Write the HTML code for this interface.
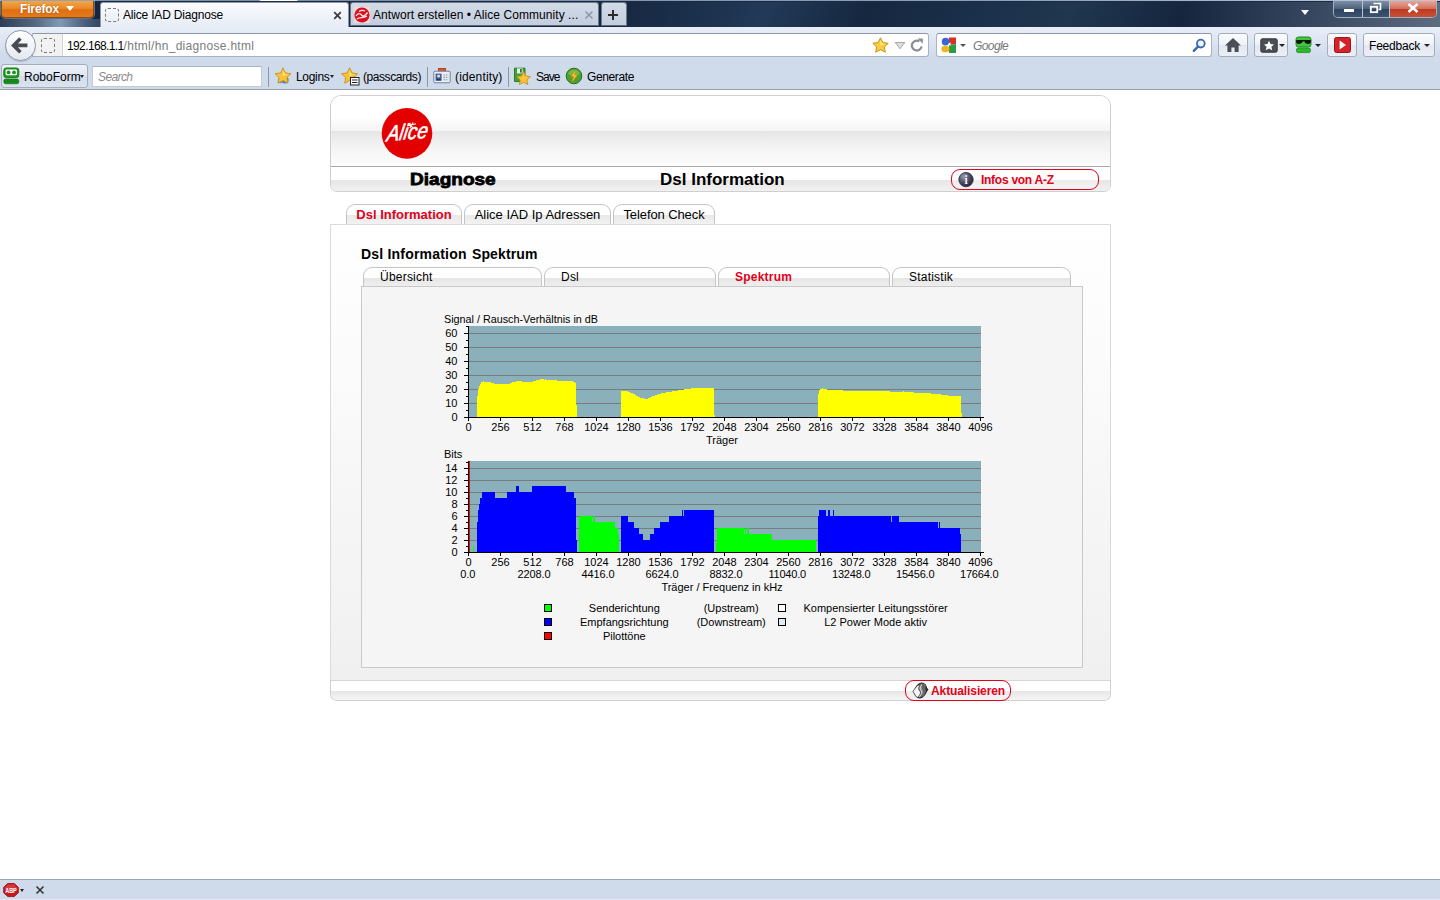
<!DOCTYPE html>
<html lang="de">
<head>
<meta charset="utf-8">
<title>Alice IAD Diagnose</title>
<style>
html,body{margin:0;padding:0;}
body{width:1440px;height:900px;overflow:hidden;background:#fff;position:relative;font-family:"Liberation Sans",sans-serif;color:#000;}
.abs{position:absolute;}
.ui{font-family:"Liberation Sans",sans-serif;font-size:12px;color:#000;white-space:nowrap;}
/* ---------- browser chrome ---------- */
#titlebar{left:0;top:0;width:1440px;height:27px;background:linear-gradient(90deg,rgba(0,0,0,0) 0%,rgba(0,0,0,0) 82%,rgba(120,135,155,.35) 92%,rgba(150,160,175,.55) 100%),linear-gradient(115deg,#16263f 0%,#16263f 42%,#1d3350 50%,#223a58 53%,#162740 60%,#1b304b 68%,#20374f 74%,#15253e 82%,#1a2d47 100%);}
#titleglow{left:0;top:19px;width:100px;height:8px;background:linear-gradient(90deg,#2c3e55 0%,#54687f 35%,#7f9bb8 60%,#4a5f78 85%,#33465e 100%);}
#topstrip{left:0;top:0;width:1440px;height:2px;background:#1b2b44;}
#topstrip2{left:0;top:0;width:1440px;height:1px;background:linear-gradient(90deg,#8496b0 0%,#7a8eaa 18%,#fff 18.1%,#fff 20.6%,#7a8eaa 20.7%,#8da0ba 70%,#aebdd2 90%,#b7c3d6 98.5%,#d9bcc4 99%,#d9bcc4 100%);}
#ffbtn{left:1px;top:1px;width:93px;height:17px;border-radius:0 0 4px 4px;background:linear-gradient(180deg,#f2a747 0%,#ea8a28 45%,#df6f14 55%,#e37a1c 100%);border:1px solid #8a4a12;border-top:none;box-sizing:border-box;box-shadow:0 0 0 1px rgba(160,175,195,.55);}
#ffbtn span{position:absolute;left:18px;top:1px;font-size:12px;font-weight:bold;color:#fff;letter-spacing:-.15px;text-shadow:0 0 2px rgba(120,50,0,.6);}
#fftri{left:66px;top:6px;width:0;height:0;border-left:4px solid transparent;border-right:4px solid transparent;border-top:5px solid #fff;}
.tab{top:2px;height:25px;box-sizing:border-box;border:1px solid #6d7a8c;border-bottom:none;border-radius:3px 3px 0 0;}
#tab1{left:100px;width:249px;background:linear-gradient(180deg,#fbfcfe 0%,#eef2f9 60%,#e6ecf6 100%);border-color:#8e99a8;}
#tab2{left:350px;width:249px;background:linear-gradient(180deg,#d3dbe8 0%,#c3cddd 100%);height:24px;border-bottom:1px solid #5d6a7c;}
#tab3{left:601px;width:26px;background:linear-gradient(180deg,#d3dbe8 0%,#c3cddd 100%);height:24px;border-bottom:1px solid #5d6a7c;}
#navbar{left:0;top:27px;width:1440px;height:36px;background:linear-gradient(180deg,#e8eef8 0%,#e3eaf5 20%,#cfdaeb 82%,#cfdaeb 100%);}
#bmbar{left:0;top:63px;width:1440px;height:26px;background:#cfdaeb;}
#chromeline{left:0;top:89px;width:1440px;height:1px;background:#9a9fa8;}
#urlbar{left:32px;top:33px;width:897px;height:24px;box-sizing:border-box;border:1px solid #a9b2c0;border-top-color:#8e97a6;border-radius:0 3px 3px 0;background:#fff;}
#idbox{left:33px;top:34px;width:29px;height:22px;background:#f2f2f2;border-right:1px solid #d4d4d4;}
.dash{box-sizing:border-box;border:1px dashed #7a7a7a;border-radius:3px;}
#backbtn{left:4.5px;top:29.5px;width:31px;height:31px;border-radius:50%;box-sizing:border-box;border:1px solid #8d97a8;background:linear-gradient(180deg,#ffffff 0%,#f1f4f9 50%,#e3e8f0 100%);box-shadow:0 1px 1px rgba(0,0,0,.15);}
#searchbar{left:936px;top:33px;width:276px;height:24px;box-sizing:border-box;border:1px solid #a9b2c0;border-top-color:#8e97a6;border-radius:3px;background:#fff;}
.tbtn{top:33px;height:24px;box-sizing:border-box;border:1px solid #a4adbb;border-radius:3px;background:linear-gradient(180deg,#fbfcfe 0%,#eef1f7 50%,#e2e7f0 51%,#eceff5 100%);}
.sep{top:67px;width:1px;height:20px;background:#9097a3;}
#statusbar{left:0;top:879px;width:1440px;height:21px;background:#cfdaeb;border-top:1px solid #9aa7bb;box-sizing:border-box;}
/* ---------- page ---------- */
#hdr{left:330px;top:95px;width:781px;height:97px;box-sizing:border-box;border:1px solid #cfcfcf;border-radius:11px 11px 7px 7px;overflow:hidden;background:#fff;}
#hdr .g1{left:0;top:0;width:100%;height:35px;background:linear-gradient(180deg,#fff 0%,#fff 60%,#f4f4f4 100%);}
#hdr .g2{left:0;top:35px;width:100%;height:35px;background:linear-gradient(180deg,#e5e5e5 0%,#eeeeee 25%,#f6f6f6 60%,#fcfcfc 100%);}
#hdr .ln{left:0;top:70px;width:100%;height:1px;background:#a9a9a9;}
#hdr .g3{left:0;top:71px;width:100%;height:13px;background:#fff;}
#hdr .g4{left:0;top:84px;width:100%;height:12px;background:linear-gradient(180deg,#e6e6e6 0%,#f2f2f2 100%);}
.ptab{top:204px;height:21px;box-sizing:border-box;border:1px solid #c4c4c4;border-bottom:none;border-radius:9px 9px 0 0;background:linear-gradient(180deg,#fff 0%,#fff 50%,#e9e9e9 52%,#f3f3f3 100%);font-size:13px;line-height:19px;text-align:center;white-space:nowrap;}
#content{left:330px;top:224px;width:781px;height:457px;box-sizing:border-box;border:1px solid #dadada;border-bottom:none;background:linear-gradient(180deg,#fff 0%,#fbfbfb 30%,#f0f0f0 100%);}
.stab{top:267px;height:20px;box-sizing:border-box;border:1px solid #c4c4c4;border-bottom:none;border-radius:9px 9px 0 0;background:linear-gradient(180deg,#fff 0%,#fff 52%,#e6e6e6 54%,#efefef 100%);font-size:12px;line-height:18px;white-space:nowrap;letter-spacing:.22px;}
#inner{left:361px;top:286px;width:722px;height:382px;box-sizing:border-box;border:1px solid #c9c9c9;background:#f5f5f5;}
#ftr{left:330px;top:680px;width:781px;height:21px;box-sizing:border-box;border:1px solid #cfcfcf;border-top-color:#d6d6d6;border-radius:0 0 7px 7px;overflow:hidden;background:#fff;}
#ftr .g{left:0;top:10px;width:100%;height:10px;background:linear-gradient(180deg,#e6e6e6 0%,#f7f7f7 100%);}
.rbtn{box-sizing:border-box;border:1px solid #e2001a;border-radius:9px;background:linear-gradient(180deg,#fff 0%,#fff 52%,#ececec 55%,#f4f4f4 100%);color:#e2001a;font-weight:bold;font-size:12px;white-space:nowrap;}
svg text{font-family:"Liberation Sans",sans-serif;}
</style>
</head>
<body>
<!-- CHROME -->
<div id="titlebar" class="abs"></div>
<div id="topstrip" class="abs"></div>
<div id="topstrip2" class="abs"></div>
<div id="titleglow" class="abs"></div>
<div id="ffbtn" class="abs ui"><span>Firefox</span></div>
<div id="fftri" class="abs"></div>
<div id="tab1" class="abs tab"></div>
<div id="tab2" class="abs tab"></div>
<div id="tab3" class="abs tab"></div>
<div id="navbar" class="abs"></div>
<div id="bmbar" class="abs"></div>
<div id="chromeline" class="abs"></div>
<!-- tab contents -->
<div class="abs dash" style="left:105px;top:8px;width:14px;height:14px;"></div>
<div class="abs ui" id="t1txt" style="letter-spacing:-0.19px;left:123px;top:8px;font-size:12px;">Alice IAD Diagnose</div>
<svg class="abs" style="left:333px;top:11px" width="9" height="9" viewBox="0 0 9 9"><path d="M1.2 1.2 L7.8 7.8 M7.8 1.2 L1.2 7.8" stroke="#3a3a3a" stroke-width="1.7" fill="none"/></svg>
<svg class="abs" style="left:354px;top:7px" width="16" height="16" viewBox="0 0 16 16"><rect x="0" y="0" width="16" height="16" fill="#f4d9dc"/><circle cx="8" cy="8" r="7.6" fill="#d9101f"/><path d="M2 9 C4 6 6 6 7.5 8 C9 10 11 9 13.5 5.5 M3 12 C6 9.5 9 12 13 9 M5 4.5 C7 3 9 3 11 4" stroke="#fbe9ea" stroke-width="1.3" fill="none"/></svg>
<div class="abs ui" id="t2txt" style="letter-spacing:0.06px;left:373px;top:8px;font-size:12px;">Antwort erstellen • Alice Community ...</div>
<svg class="abs" style="left:584px;top:10px" width="10" height="10" viewBox="0 0 10 10"><path d="M1.5 1.5 L8.5 8.5 M8.5 1.5 L1.5 8.5" stroke="#8f98a6" stroke-width="1.6" fill="none"/></svg>
<svg class="abs" style="left:607px;top:9px" width="12" height="12" viewBox="0 0 12 12"><path d="M6 1 V11 M1 6 H11" stroke="#2b2b2b" stroke-width="2" fill="none"/></svg>
<!-- window controls -->
<div class="abs" style="left:1301px;top:10px;width:0;height:0;border-left:4px solid transparent;border-right:4px solid transparent;border-top:5px solid #fff;"></div>
<div class="abs" id="wctl" style="left:1333px;top:1px;width:104px;height:17px;box-sizing:border-box;border:1px solid #9fb0c4;border-top:none;border-radius:0 0 5px 5px;overflow:hidden;background:#3a4c64;">
  <div class="abs" style="left:0;top:0;width:28px;height:17px;background:linear-gradient(180deg,#7d8fa6 0%,#4e627c 45%,#2f4460 50%,#3d5472 100%);border-right:1px solid #b9c6d6;"></div>
  <div class="abs" style="left:29px;top:0;width:26px;height:17px;background:linear-gradient(180deg,#7d8fa6 0%,#4e627c 45%,#2f4460 50%,#3d5472 100%);border-right:1px solid #b9c6d6;"></div>
  <div class="abs" style="left:56px;top:0;width:47px;height:17px;background:linear-gradient(180deg,#e3a79b 0%,#d2705d 45%,#bf3a20 50%,#c9543a 100%);"></div>
  <div class="abs" style="left:10px;top:8px;width:10px;height:3px;background:#fff;box-shadow:0 0 1px #333;"></div>
  <svg class="abs" style="left:35px;top:1px" width="13" height="12" viewBox="0 0 13 12"><path d="M4.5 1.5 H11.5 V7.5 H9.5" stroke="#fff" stroke-width="1.6" fill="none"/><rect x="1.8" y="4.8" width="6.4" height="5.4" stroke="#fff" stroke-width="1.8" fill="none"/></svg>
  <svg class="abs" style="left:73px;top:2px" width="12" height="10" viewBox="0 0 12 10"><path d="M1.5 1 L10.5 9 M10.5 1 L1.5 9" stroke="#fff" stroke-width="2.6" fill="none"/></svg>
</div>
<!-- nav bar -->
<div id="urlbar" class="abs"></div>
<div id="idbox" class="abs"></div>
<div id="backbtn" class="abs"></div>
<svg class="abs" style="left:11px;top:37px" width="18" height="17" viewBox="0 0 18 17"><path d="M9.4 1.6 L2.6 8.4 L9.4 15.2 M3.4 8.4 H16.4" stroke="#484d53" stroke-width="3.6" fill="none" stroke-linejoin="miter"/></svg>
<div class="abs dash" style="left:41px;top:38px;width:14px;height:15px;"></div>
<div class="abs ui" id="urltxt" style="left:67px;top:39px;font-size:12px;"><span style="color:#000;letter-spacing:-0.62px">192.168.1.1</span><span style="color:#7b7b7b;letter-spacing:.3px">/html/hn_diagnose.html</span></div>
<svg class="abs" style="left:872px;top:37px" width="17" height="16" viewBox="0 0 17 16"><path d="M8.5 0.8 L10.9 5.6 L16.2 6.3 L12.3 10 L13.3 15.2 L8.5 12.7 L3.7 15.2 L4.7 10 L0.8 6.3 L6.1 5.6 Z" fill="#f9cf3f" stroke="#c8901a" stroke-width="1"/><path d="M8.5 3 L10.1 6.5 L13.5 7 L8.5 8 Z" fill="#fdeea0"/></svg>
<svg class="abs" style="left:894px;top:41px" width="12" height="9" viewBox="0 0 12 9"><path d="M1.2 1.5 H10.8 L6 7.8 Z" fill="#dcdcdc" stroke="#a9a9a9" stroke-width="1"/></svg>
<svg class="abs" style="left:910px;top:38px" width="14" height="14" viewBox="0 0 14 14"><path d="M11.6 8.4 A4.9 4.9 0 1 1 9.4 3.4" stroke="#8a8e95" stroke-width="2.2" fill="none"/><path d="M7.6 0.6 H12.8 V5.8 Z" fill="#8a8e95"/></svg>
<div id="searchbar" class="abs"></div>
<svg class="abs" style="left:940px;top:37px" width="17" height="16" viewBox="0 0 17 16"><rect x="0" y="0" width="16" height="16" fill="#fff"/><rect x="9" y="0.5" width="7" height="7" fill="#d92f25"/><rect x="9" y="7.5" width="7" height="8.5" fill="#2c9c43"/><ellipse cx="5.6" cy="4.6" rx="3.8" ry="3.9" fill="#3567d6"/><ellipse cx="5.4" cy="12" rx="4" ry="3.2" fill="#f0b41c"/><path d="M8 7 L10.5 5.2 V9 Z" fill="#fff"/></svg>
<div class="abs" style="left:960px;top:44px;width:0;height:0;border-left:3px solid transparent;border-right:3px solid transparent;border-top:3px solid #555;"></div>
<div class="abs ui" id="gtxt" style="letter-spacing:-0.6px;left:973px;top:39px;font-size:12px;font-style:italic;color:#777;">Google</div>
<svg class="abs" style="left:1192px;top:38px" width="15" height="15" viewBox="0 0 15 15"><circle cx="8.8" cy="5.6" r="3.9" stroke="#3b68ad" stroke-width="1.8" fill="#eef4fc"/><path d="M6 8.6 L1.8 12.8" stroke="#3b68ad" stroke-width="2.4" stroke-linecap="round"/></svg>
<div class="abs tbtn" style="left:1218px;width:30px;"></div>
<svg class="abs" style="left:1224px;top:37px" width="18" height="16" viewBox="0 0 18 16"><path d="M9 1 L17 8.6 H14.6 V15 H10.6 V10.4 H7.4 V15 H3.4 V8.6 H1 Z" fill="#4b4f55"/></svg>
<div class="abs tbtn" style="left:1254px;width:34px;"></div>
<svg class="abs" style="left:1260px;top:38px" width="18" height="15" viewBox="0 0 18 15"><rect x="0.8" y="0.8" width="16.4" height="13.4" rx="1.5" fill="#4b4f55" stroke="#33373c"/><path d="M9 2.8 L10.5 6 L14 6.4 L11.4 8.7 L12.2 12.2 L9 10.4 L5.8 12.2 L6.6 8.7 L4 6.4 L7.5 6 Z" fill="#fff"/></svg>
<div class="abs" style="left:1278.5px;top:44px;width:0;height:0;border-left:3px solid transparent;border-right:3px solid transparent;border-top:3px solid #222;"></div>
<svg class="abs" style="left:1295px;top:36px" width="18" height="18" viewBox="0 0 18 18"><rect x="1" y="1" width="15" height="10" rx="2.5" fill="#3ec93a" stroke="#1f8a1e"/><rect x="1.5" y="12" width="14" height="4.6" rx="1.8" fill="#2fb62c" stroke="#1f8a1e" stroke-width=".8"/><path d="M1.2 4 H15.8 V6 C15.8 8.6 10.2 8.6 9.4 5.6 H7.6 C6.8 8.6 1.2 8.6 1.2 6 Z" fill="#111"/></svg>
<div class="abs" style="left:1315px;top:44px;width:0;height:0;border-left:3px solid transparent;border-right:3px solid transparent;border-top:3px solid #222;"></div>
<div class="abs tbtn" style="left:1327px;width:30px;"></div>
<svg class="abs" style="left:1334px;top:37px" width="17" height="16" viewBox="0 0 17 16"><rect x="0.5" y="0.5" width="16" height="15" rx="2" fill="#d4222b" stroke="#9c1219"/><path d="M5.6 3.6 L12 8 L5.6 12.4 Z" fill="#fff"/></svg>
<div class="abs tbtn" style="left:1363px;width:72px;"></div>
<div class="abs ui" id="fbtxt" style="letter-spacing:-0.2px;left:1369px;top:39px;font-size:12px;">Feedback</div>
<div class="abs" style="left:1424px;top:44px;width:0;height:0;border-left:3px solid transparent;border-right:3px solid transparent;border-top:3px solid #222;"></div>
<!-- bookmarks / roboform bar -->
<div class="abs" style="left:1px;top:64px;width:87px;height:24px;box-sizing:border-box;border:1px solid #a4adbb;border-radius:3px;background:linear-gradient(180deg,#eef2f9 0%,#dfe6f2 50%,#d3dcea 51%,#dbe3ef 100%);"></div>
<svg class="abs" style="left:3px;top:67px" width="17" height="18" viewBox="0 0 17 18"><rect x="0.8" y="1" width="15" height="9.6" rx="2.4" fill="#1f9a22" stroke="#157a18"/><rect x="2.6" y="2.6" width="11.4" height="5.6" rx="1.2" fill="#fff"/><circle cx="5.6" cy="5.4" r="1.9" fill="#1c8f1f"/><circle cx="11" cy="5.4" r="1.9" fill="#1c8f1f"/><rect x="0.8" y="12" width="15" height="4.8" rx="1.8" fill="#168a19" stroke="#0f6e12" stroke-width=".6"/></svg>
<div class="abs ui" id="rftxt" style="left:24px;top:70px;font-size:12px;">RoboForm</div>
<div class="abs" style="left:80px;top:75px;width:0;height:0;border-left:2.5px solid transparent;border-right:2.5px solid transparent;border-top:3px solid #222;"></div>
<div class="abs" style="left:92px;top:66px;width:170px;height:21px;box-sizing:border-box;border:1px solid #c3cbd8;border-top-color:#aab3c2;background:#fff;"></div>
<div class="abs ui" id="srchtxt" style="letter-spacing:-0.6px;left:98px;top:70px;font-size:12px;font-style:italic;color:#8a8a8a;">Search</div>
<div class="abs sep" style="left:268px;"></div>
<svg class="abs" style="left:274px;top:67px" width="18" height="18" viewBox="0 0 18 18"><circle cx="11" cy="13" r="3.6" fill="#3d7fcc"/><circle cx="6.4" cy="13.6" r="2.6" fill="#5b9be0"/><path d="M9 0.8 L11.4 6 L17 6.7 L12.9 10.6 L13.9 16.2 L9 13.5 L4.1 16.2 L5.1 10.6 L1 6.7 L6.6 6 Z" fill="#f7c437" stroke="#cf8f17" stroke-width=".9"/><path d="M9 3 L10.6 6.8 L14 7.3 L9 9 Z" fill="#fde58c"/></svg>
<div class="abs ui" id="logtxt" style="letter-spacing:-0.3px;left:296px;top:70px;font-size:12px;">Logins</div>
<div class="abs" style="left:330px;top:75px;width:0;height:0;border-left:2.5px solid transparent;border-right:2.5px solid transparent;border-top:3px solid #222;"></div>
<svg class="abs" style="left:341px;top:67px" width="19" height="19" viewBox="0 0 19 19"><path d="M8.6 0.8 L11 6 L16.6 6.7 L12.5 10.6 L13.5 16.2 L8.6 13.5 L3.7 16.2 L4.7 10.6 L0.6 6.7 L6.2 6 Z" fill="#f7c437" stroke="#cf8f17" stroke-width=".9"/><path d="M8.6 3 L10.2 6.8 L13.6 7.3 L8.6 9 Z" fill="#fde58c"/><rect x="9.5" y="10.5" width="8.5" height="7.5" fill="#fff" stroke="#222" stroke-width="1"/><path d="M11 13 H16.5 M11 15.5 H16.5" stroke="#222" stroke-width="1.2"/></svg>
<div class="abs ui" id="pctxt" style="letter-spacing:-0.43px;left:363px;top:70px;font-size:12px;">(passcards)</div>
<div class="abs sep" style="left:427px;"></div>
<svg class="abs" style="left:433px;top:68px" width="18" height="16" viewBox="0 0 18 16"><rect x="5.5" y="0.5" width="7" height="3.5" fill="#e0522e" stroke="#a33412" stroke-width=".8"/><rect x="0.8" y="3.2" width="16.4" height="11.6" rx="1.2" fill="#e9eef6" stroke="#6e7f98"/><rect x="2.6" y="5.6" width="6" height="7" fill="#3c5f9c"/><circle cx="5.6" cy="8" r="1.6" fill="#f3d3b0"/><path d="M3 12.6 C3 10 8.2 10 8.2 12.6 Z" fill="#223a66"/><path d="M10.4 7 H15.4 M10.4 9.4 H15.4 M10.4 11.8 H15.4" stroke="#8a97ab" stroke-width="1.1" stroke-dasharray="1.6 .8"/></svg>
<div class="abs ui" id="idtxt" style="letter-spacing:0.15px;left:455px;top:70px;font-size:12px;">(identity)</div>
<div class="abs sep" style="left:508px;"></div>
<svg class="abs" style="left:513px;top:67px" width="18" height="18" viewBox="0 0 18 18"><path d="M1.5 1.2 H12 V14.6 H1.5 Z" fill="#3fa338" stroke="#22721f" stroke-width=".9"/><rect x="4" y="1.4" width="5.6" height="5" fill="#e9f3e6"/><rect x="7" y="2" width="1.8" height="3.6" fill="#2c7d27"/><path d="M10.6 4.6 L12.6 9 L17.4 9.6 L13.9 12.9 L14.8 17.6 L10.6 15.3 L6.4 17.6 L7.3 12.9 L3.8 9.6 L8.6 9 Z" fill="#f7c437" stroke="#cf8f17" stroke-width=".9"/></svg>
<div class="abs ui" id="svtxt" style="letter-spacing:-0.95px;left:536px;top:70px;font-size:12px;">Save</div>
<svg class="abs" style="left:565px;top:67px" width="18" height="18" viewBox="0 0 18 18"><circle cx="9" cy="9" r="7.8" fill="#4da02f" stroke="#2c6f1b"/><path d="M3 7 A6.4 6.4 0 0 1 15 7 C11 9 7 9 3 7 Z" fill="#79c256" opacity=".8"/><path d="M11.2 2.6 L5.6 9.6 H8.6 L6.8 15.4 L12.6 7.8 H9.6 Z" fill="#f6c233" stroke="#c98a12" stroke-width=".6"/></svg>
<div class="abs ui" id="gentxt" style="letter-spacing:-0.38px;left:587px;top:70px;font-size:12px;">Generate</div>

<!-- PAGE -->
<div id="hdr" class="abs"><div class="abs g1"></div><div class="abs g2"></div><div class="abs ln"></div><div class="abs g3"></div><div class="abs g4"></div></div>
<svg class="abs" style="left:380px;top:107px" width="54" height="54" viewBox="0 0 54 54"><circle cx="27" cy="26.4" r="25.3" fill="#e20000"/><g transform="translate(27.5 26) rotate(-5) skewX(-14)"><text x="0" y="6.4" text-anchor="middle" font-size="22" font-style="italic" fill="#fff" stroke="#fff" stroke-width=".55" textLength="41" lengthAdjust="spacingAndGlyphs" style="font-family:'Liberation Sans',sans-serif">Alice</text></g><path d="M27 19 L36 16.7 M29.5 16.1 L32.5 20.5 M33.1 15.5 L29.9 20.9" stroke="#fff" stroke-width="1.1" fill="none"/></svg>
<div class="abs" id="h1a" style="left:410px;top:170px;font-size:17px;line-height:20px;font-weight:bold;white-space:nowrap;-webkit-text-stroke:0.8px #000;transform-origin:0 0;transform:scaleX(1.12);">Diagnose</div>
<div class="abs" id="h1b" style="left:660px;top:170px;font-size:17px;line-height:20px;font-weight:bold;white-space:nowrap;">Dsl Information</div>
<div class="abs rbtn" id="infobtn" style="left:951px;top:169px;width:148px;height:21px;"></div>
<svg class="abs" style="left:958px;top:172px" width="16" height="16" viewBox="0 0 16 16"><defs><radialGradient id="ig" cx="35%" cy="30%" r="75%"><stop offset="0" stop-color="#9a9ab0"/><stop offset=".55" stop-color="#4a4a60"/><stop offset="1" stop-color="#26263a"/></radialGradient></defs><circle cx="8" cy="7.6" r="7.2" fill="url(#ig)" stroke="#2c2c3c" stroke-width=".8"/><text x="8" y="12" text-anchor="middle" font-size="11.5" font-weight="bold" fill="#f4f4f8" style="font-family:'Liberation Serif',serif">i</text></svg>
<div class="abs" id="infotxt" style="letter-spacing:-0.27px;left:981px;top:173px;font-size:12px;line-height:14px;font-weight:bold;color:#e2001a;white-space:nowrap;">Infos von A-Z</div>
<div class="abs ptab" id="pt1" style="left:346px;width:116px;color:#e2001a;font-weight:bold;">Dsl Information</div>
<div class="abs ptab" id="pt2" style="left:464px;width:147px;">Alice IAD Ip Adressen</div>
<div class="abs ptab" id="pt3" style="left:613px;width:102px;letter-spacing:-.1px;">Telefon Check</div>
<div id="content" class="abs"></div>
<div class="abs" id="h2" style="left:361px;top:246px;font-size:14px;line-height:16px;font-weight:bold;white-space:nowrap;letter-spacing:.2px;">Dsl Information <span style="margin-left:1.2px;letter-spacing:.14px">Spektrum</span></div>
<div class="abs stab" id="st1" style="left:363px;width:179px;padding-left:16px;color:#000;">Übersicht</div>
<div class="abs stab" id="st2" style="left:544px;width:172px;padding-left:16px;color:#000;">Dsl</div>
<div class="abs stab" id="st3" style="left:718px;width:172px;padding-left:16px;color:#e2001a;font-weight:bold;">Spektrum</div>
<div class="abs stab" id="st4" style="left:892px;width:179px;padding-left:16px;color:#000;">Statistik</div>
<div id="inner" class="abs"></div>
<svg class="abs" style="left:430px;top:300px" width="600" height="350" viewBox="430 300 600 350" shape-rendering="crispEdges">
<rect x="469" y="326" width="512" height="91" fill="#8ab0bc"/>
<rect x="469" y="333" width="512" height="1" fill="#7b7b7b"/>
<rect x="469" y="347" width="512" height="1" fill="#7b7b7b"/>
<rect x="469" y="361" width="512" height="1" fill="#7b7b7b"/>
<rect x="469" y="375" width="512" height="1" fill="#7b7b7b"/>
<rect x="469" y="389" width="512" height="1" fill="#7b7b7b"/>
<rect x="469" y="403" width="512" height="1" fill="#7b7b7b"/>
<path d="M477,417V396H478V389H479V386H480V384H481V382H482V382H483V381H484V382H485V382H486V382H487V382H488V382H489V382H490V382H491V383H492V383H493V383H494V384H495V384H496V384H497V384H498V384H499V384H500V384H501V384H502V384H503V384H504V384H505V384H506V384H507V384H508V384H509V384H510V383H511V383H512V382H513V382H514V382H515V382H516V381H517V381H518V381H519V381H520V381H521V381H522V382H523V382H524V382H525V382H526V382H527V382H528V382H529V382H530V382H531V382H532V382H533V381H534V381H535V381H536V380H537V380H538V380H539V380H540V379H541V379H542V379H543V379H544V380H545V379H546V380H547V380H548V380H549V380H550V380H551V380H552V380H553V380H554V380H555V380H556V380H557V381H558V381H559V381H560V381H561V381H562V381H563V381H564V381H565V381H566V381H567V381H568V381H569V381H570V381H571V381H572V381H573V382H574V382H575V383H576V405H577V417ZM621,417V391H622V391H623V391H624V391H625V391H626V391H627V391H628V392H629V392H630V393H631V393H632V393H633V394H634V394H635V395H636V396H637V396H638V397H639V397H640V398H641V398H642V398H643V398H644V399H645V399H646V399H647V399H648V398H649V398H650V397H651V397H652V396H653V396H654V396H655V395H656V395H657V395H658V394H659V394H660V394H661V393H662V393H663V393H664V393H665V393H666V392H667V392H668V392H669V392H670V392H671V392H672V391H673V391H674V391H675V391H676V391H677V391H678V390H679V390H680V390H681V390H682V390H683V390H684V389H685V389H686V389H687V389H688V389H689V389H690V389H691V388H692V388H693V388H694V388H695V388H696V388H697V388H698V388H699V388H700V388H701V388H702V388H703V388H704V388H705V388H706V388H707V388H708V388H709V388H710V388H711V388H712V388H713V388H714V415H715V417ZM818,417V394H819V390H820V389H821V389H822V388H823V389H824V389H825V389H826V389H827V390H828V390H829V390H830V390H831V390H832V390H833V390H834V390H835V390H836V390H837V390H838V390H839V390H840V390H841V390H842V390H843V391H844V391H845V391H846V391H847V391H848V391H849V391H850V391H851V391H852V391H853V391H854V391H855V391H856V391H857V391H858V391H859V391H860V391H861V391H862V391H863V391H864V391H865V391H866V391H867V391H868V391H869V391H870V391H871V391H872V391H873V391H874V391H875V391H876V391H877V391H878V391H879V391H880V391H881V391H882V391H883V391H884V391H885V391H886V391H887V391H888V391H889V391H890V392H891V392H892V392H893V392H894V392H895V392H896V392H897V392H898V392H899V392H900V392H901V392H902V392H903V391H904V392H905V392H906V392H907V392H908V392H909V392H910V392H911V392H912V392H913V392H914V393H915V393H916V393H917V393H918V393H919V393H920V393H921V393H922V393H923V393H924V393H925V393H926V393H927V393H928V393H929V393H930V393H931V394H932V394H933V394H934V394H935V394H936V394H937V394H938V394H939V394H940V394H941V395H942V395H943V395H944V395H945V395H946V395H947V395H948V396H949V396H950V396H951V396H952V396H953V396H954V396H955V396H956V396H957V396H958V396H959V396H960V396H961V413H962V417Z" fill="#ffff00"/>
<rect x="468" y="326" width="1" height="92" fill="#000"/>
<rect x="464" y="417" width="520" height="1" fill="#000"/>
<rect x="464" y="333" width="4" height="1" fill="#000"/>
<rect x="464" y="347" width="4" height="1" fill="#000"/>
<rect x="464" y="361" width="4" height="1" fill="#000"/>
<rect x="464" y="375" width="4" height="1" fill="#000"/>
<rect x="464" y="389" width="4" height="1" fill="#000"/>
<rect x="464" y="403" width="4" height="1" fill="#000"/>
<rect x="464" y="417" width="4" height="1" fill="#000"/>
<rect x="466" y="326" width="2" height="1" fill="#000"/>
<rect x="466" y="340" width="2" height="1" fill="#000"/>
<rect x="466" y="354" width="2" height="1" fill="#000"/>
<rect x="466" y="368" width="2" height="1" fill="#000"/>
<rect x="466" y="382" width="2" height="1" fill="#000"/>
<rect x="466" y="396" width="2" height="1" fill="#000"/>
<rect x="466" y="410" width="2" height="1" fill="#000"/>
<rect x="468" y="417" width="1" height="4" fill="#000"/>
<rect x="500" y="417" width="1" height="4" fill="#000"/>
<rect x="532" y="417" width="1" height="4" fill="#000"/>
<rect x="564" y="417" width="1" height="4" fill="#000"/>
<rect x="596" y="417" width="1" height="4" fill="#000"/>
<rect x="628" y="417" width="1" height="4" fill="#000"/>
<rect x="660" y="417" width="1" height="4" fill="#000"/>
<rect x="692" y="417" width="1" height="4" fill="#000"/>
<rect x="724" y="417" width="1" height="4" fill="#000"/>
<rect x="756" y="417" width="1" height="4" fill="#000"/>
<rect x="788" y="417" width="1" height="4" fill="#000"/>
<rect x="820" y="417" width="1" height="4" fill="#000"/>
<rect x="852" y="417" width="1" height="4" fill="#000"/>
<rect x="884" y="417" width="1" height="4" fill="#000"/>
<rect x="916" y="417" width="1" height="4" fill="#000"/>
<rect x="948" y="417" width="1" height="4" fill="#000"/>
<rect x="980" y="417" width="1" height="4" fill="#000"/>
</svg>
<svg class="abs" style="left:430px;top:300px" width="600" height="350" viewBox="430 300 600 350" font-size="11" fill="#000">
<text id="c1title" x="444" y="323" textLength="154" lengthAdjust="spacingAndGlyphs">Signal / Rausch-Verhältnis in dB</text>
<text x="457.5" y="337" text-anchor="end">60</text>
<text x="457.5" y="351" text-anchor="end">50</text>
<text x="457.5" y="365" text-anchor="end">40</text>
<text x="457.5" y="379" text-anchor="end">30</text>
<text x="457.5" y="393" text-anchor="end">20</text>
<text x="457.5" y="407" text-anchor="end">10</text>
<text x="457.5" y="421" text-anchor="end">0</text>
<text x="468.5" y="431" text-anchor="middle">0</text>
<text x="500.5" y="431" text-anchor="middle">256</text>
<text x="532.5" y="431" text-anchor="middle">512</text>
<text x="564.5" y="431" text-anchor="middle">768</text>
<text x="596.5" y="431" text-anchor="middle">1024</text>
<text x="628.5" y="431" text-anchor="middle">1280</text>
<text x="660.5" y="431" text-anchor="middle">1536</text>
<text x="692.5" y="431" text-anchor="middle">1792</text>
<text x="724.5" y="431" text-anchor="middle">2048</text>
<text x="756.5" y="431" text-anchor="middle">2304</text>
<text x="788.5" y="431" text-anchor="middle">2560</text>
<text x="820.5" y="431" text-anchor="middle">2816</text>
<text x="852.5" y="431" text-anchor="middle">3072</text>
<text x="884.5" y="431" text-anchor="middle">3328</text>
<text x="916.5" y="431" text-anchor="middle">3584</text>
<text x="948.5" y="431" text-anchor="middle">3840</text>
<text x="980.5" y="431" text-anchor="middle">4096</text>
<text x="722" y="444" text-anchor="middle">Träger</text>
</svg>
<svg class="abs" style="left:430px;top:445px" width="600" height="210" viewBox="430 445 600 210" shape-rendering="crispEdges">
<rect x="469" y="461" width="512" height="91" fill="#8ab0bc"/>
<rect x="469" y="468" width="512" height="1" fill="#7b7b7b"/>
<rect x="469" y="480" width="512" height="1" fill="#7b7b7b"/>
<rect x="469" y="492" width="512" height="1" fill="#7b7b7b"/>
<rect x="469" y="504" width="512" height="1" fill="#7b7b7b"/>
<rect x="469" y="516" width="512" height="1" fill="#7b7b7b"/>
<rect x="469" y="528" width="512" height="1" fill="#7b7b7b"/>
<rect x="469" y="540" width="512" height="1" fill="#7b7b7b"/>
<path d="M477,552V522H478V510H479V504H480V498H481V498H482V492H483V492H484V492H485V492H486V492H487V492H488V492H489V492H490V492H491V492H492V492H493V492H494V492H495V498H496V498H497V498H498V498H499V498H500V498H501V498H502V498H503V498H504V498H505V498H506V498H507V492H508V492H509V492H510V492H511V492H512V492H513V492H514V492H515V492H516V486H517V486H518V486H519V492H520V492H521V492H522V492H523V492H524V492H525V492H526V492H527V492H528V492H529V492H530V492H531V492H532V486H533V486H534V486H535V486H536V486H537V486H538V486H539V486H540V486H541V486H542V486H543V486H544V486H545V486H546V486H547V486H548V486H549V486H550V486H551V486H552V486H553V486H554V486H555V486H556V486H557V486H558V486H559V486H560V486H561V486H562V486H563V486H564V486H565V486H566V492H567V492H568V492H569V492H570V492H571V492H572V492H573V492H574V498H575V498H576V540H577V552ZM621,552V516H622V516H623V516H624V516H625V516H626V516H627V516H628V522H629V522H630V522H631V522H632V522H633V522H634V528H635V528H636V528H637V528H638V528H639V534H640V534H641V534H642V534H643V540H644V540H645V540H646V540H647V540H648V540H649V540H650V534H651V534H652V534H653V534H654V528H655V528H656V528H657V528H658V528H659V528H660V522H661V522H662V522H663V522H664V522H665V522H666V522H667V522H668V522H669V516H670V516H671V516H672V516H673V516H674V516H675V516H676V516H677V516H678V516H679V516H680V516H681V516H682V510H683V516H684V510H685V510H686V510H687V510H688V510H689V510H690V510H691V510H692V510H693V510H694V510H695V510H696V510H697V510H698V510H699V510H700V510H701V510H702V510H703V510H704V510H705V510H706V510H707V510H708V510H709V510H710V510H711V510H712V510H713V510H714V552ZM818,552V516H819V510H820V510H821V510H822V510H823V510H824V510H825V510H826V516H827V516H828V510H829V510H830V516H831V516H832V516H833V510H834V516H835V516H836V516H837V516H838V516H839V516H840V516H841V516H842V516H843V516H844V516H845V516H846V516H847V516H848V516H849V516H850V516H851V516H852V516H853V516H854V516H855V516H856V516H857V516H858V516H859V516H860V516H861V516H862V516H863V516H864V516H865V516H866V516H867V516H868V516H869V516H870V516H871V516H872V516H873V516H874V516H875V516H876V516H877V516H878V516H879V516H880V516H881V516H882V516H883V516H884V516H885V516H886V516H887V516H888V516H889V516H890V516H891V522H892V516H893V516H894V516H895V516H896V516H897V516H898V516H899V522H900V522H901V522H902V522H903V522H904V522H905V522H906V522H907V522H908V522H909V522H910V522H911V522H912V522H913V522H914V522H915V522H916V522H917V522H918V522H919V522H920V522H921V522H922V522H923V522H924V522H925V522H926V522H927V522H928V522H929V522H930V522H931V522H932V522H933V522H934V522H935V522H936V522H937V522H938V528H939V522H940V528H941V528H942V528H943V528H944V528H945V528H946V528H947V528H948V528H949V528H950V528H951V528H952V528H953V528H954V528H955V528H956V528H957V528H958V528H959V528H960V534H961V552Z" fill="#0000ff"/>
<path d="M473,552V546H474V552ZM579,552V516H580V516H581V516H582V516H583V516H584V516H585V516H586V516H587V516H588V516H589V516H590V516H591V516H592V522H593V516H594V516H595V522H596V522H597V522H598V522H599V522H600V522H601V522H602V522H603V522H604V522H605V522H606V522H607V522H608V522H609V522H610V522H611V522H612V522H613V522H614V522H615V528H616V528H617V528H618V534H619V552ZM716,552V540H717V528H718V528H719V528H720V528H721V528H722V528H723V528H724V528H725V528H726V528H727V528H728V528H729V528H730V528H731V528H732V528H733V528H734V528H735V528H736V528H737V528H738V528H739V528H740V528H741V528H742V528H743V528H744V534H745V528H746V534H747V528H748V528H749V534H750V534H751V534H752V534H753V534H754V534H755V534H756V534H757V534H758V534H759V534H760V534H761V534H762V534H763V534H764V534H765V534H766V534H767V534H768V534H769V534H770V534H771V534H772V540H773V540H774V540H775V540H776V540H777V540H778V540H779V540H780V540H781V540H782V540H783V540H784V540H785V540H786V540H787V540H788V540H789V540H790V540H791V540H792V540H793V540H794V540H795V540H796V540H797V540H798V540H799V540H800V540H801V540H802V540H803V540H804V540H805V540H806V540H807V540H808V540H809V540H810V540H811V540H812V540H813V540H814V540H815V540H816V552Z" fill="#00ff00"/>
<rect x="468" y="461" width="1" height="92" fill="#000"/>
<rect x="469" y="461" width="1" height="91" fill="#ff0000"/>
<rect x="464" y="552" width="520" height="1" fill="#000"/>
<rect x="464" y="468" width="4" height="1" fill="#000"/>
<rect x="464" y="480" width="4" height="1" fill="#000"/>
<rect x="464" y="492" width="4" height="1" fill="#000"/>
<rect x="464" y="504" width="4" height="1" fill="#000"/>
<rect x="464" y="516" width="4" height="1" fill="#000"/>
<rect x="464" y="528" width="4" height="1" fill="#000"/>
<rect x="464" y="540" width="4" height="1" fill="#000"/>
<rect x="464" y="552" width="4" height="1" fill="#000"/>
<rect x="466" y="462" width="2" height="1" fill="#000"/>
<rect x="466" y="474" width="2" height="1" fill="#000"/>
<rect x="466" y="486" width="2" height="1" fill="#000"/>
<rect x="466" y="498" width="2" height="1" fill="#000"/>
<rect x="466" y="510" width="2" height="1" fill="#000"/>
<rect x="466" y="522" width="2" height="1" fill="#000"/>
<rect x="466" y="534" width="2" height="1" fill="#000"/>
<rect x="466" y="546" width="2" height="1" fill="#000"/>
<rect x="468" y="552" width="1" height="4" fill="#000"/>
<rect x="500" y="552" width="1" height="4" fill="#000"/>
<rect x="532" y="552" width="1" height="4" fill="#000"/>
<rect x="564" y="552" width="1" height="4" fill="#000"/>
<rect x="596" y="552" width="1" height="4" fill="#000"/>
<rect x="628" y="552" width="1" height="4" fill="#000"/>
<rect x="660" y="552" width="1" height="4" fill="#000"/>
<rect x="692" y="552" width="1" height="4" fill="#000"/>
<rect x="724" y="552" width="1" height="4" fill="#000"/>
<rect x="756" y="552" width="1" height="4" fill="#000"/>
<rect x="788" y="552" width="1" height="4" fill="#000"/>
<rect x="820" y="552" width="1" height="4" fill="#000"/>
<rect x="852" y="552" width="1" height="4" fill="#000"/>
<rect x="884" y="552" width="1" height="4" fill="#000"/>
<rect x="916" y="552" width="1" height="4" fill="#000"/>
<rect x="948" y="552" width="1" height="4" fill="#000"/>
<rect x="980" y="552" width="1" height="4" fill="#000"/>
<rect x="544.5" y="604.5" width="7" height="7" fill="#00ff00" stroke="#000" stroke-width="1"/>
<rect x="544.5" y="618.5" width="7" height="7" fill="#0000ff" stroke="#000" stroke-width="1"/>
<rect x="544.5" y="632.5" width="7" height="7" fill="#ff0000" stroke="#000" stroke-width="1"/>
<rect x="778.5" y="604.5" width="7" height="7" fill="#ffffff" stroke="#000" stroke-width="1"/>
<rect x="778.5" y="618.5" width="7" height="7" fill="#dcecf8" stroke="#000" stroke-width="1"/>
</svg>
<svg class="abs" style="left:430px;top:445px" width="600" height="210" viewBox="430 445 600 210" font-size="11" fill="#000">
<text x="444" y="458">Bits</text>
<text x="457.5" y="472" text-anchor="end">14</text>
<text x="457.5" y="484" text-anchor="end">12</text>
<text x="457.5" y="496" text-anchor="end">10</text>
<text x="457.5" y="508" text-anchor="end">8</text>
<text x="457.5" y="520" text-anchor="end">6</text>
<text x="457.5" y="532" text-anchor="end">4</text>
<text x="457.5" y="544" text-anchor="end">2</text>
<text x="457.5" y="556" text-anchor="end">0</text>
<text x="468.5" y="566" text-anchor="middle">0</text>
<text x="500.5" y="566" text-anchor="middle">256</text>
<text x="532.5" y="566" text-anchor="middle">512</text>
<text x="564.5" y="566" text-anchor="middle">768</text>
<text x="596.5" y="566" text-anchor="middle">1024</text>
<text x="628.5" y="566" text-anchor="middle">1280</text>
<text x="660.5" y="566" text-anchor="middle">1536</text>
<text x="692.5" y="566" text-anchor="middle">1792</text>
<text x="724.5" y="566" text-anchor="middle">2048</text>
<text x="756.5" y="566" text-anchor="middle">2304</text>
<text x="788.5" y="566" text-anchor="middle">2560</text>
<text x="820.5" y="566" text-anchor="middle">2816</text>
<text x="852.5" y="566" text-anchor="middle">3072</text>
<text x="884.5" y="566" text-anchor="middle">3328</text>
<text x="916.5" y="566" text-anchor="middle">3584</text>
<text x="948.5" y="566" text-anchor="middle">3840</text>
<text x="980.5" y="566" text-anchor="middle">4096</text>
<text x="467.8" y="578" text-anchor="middle" letter-spacing="-0.1">0.0</text>
<text x="533.9" y="578" text-anchor="middle" letter-spacing="-0.1">2208.0</text>
<text x="597.9" y="578" text-anchor="middle" letter-spacing="-0.1">4416.0</text>
<text x="661.9" y="578" text-anchor="middle" letter-spacing="-0.1">6624.0</text>
<text x="725.9" y="578" text-anchor="middle" letter-spacing="-0.1">8832.0</text>
<text x="787.2" y="578" text-anchor="middle" letter-spacing="-0.2">11040.0</text>
<text x="851.2" y="578" text-anchor="middle" letter-spacing="-0.2">13248.0</text>
<text x="915.2" y="578" text-anchor="middle" letter-spacing="-0.2">15456.0</text>
<text x="979.2" y="578" text-anchor="middle" letter-spacing="-0.2">17664.0</text>
<text x="722" y="591" text-anchor="middle">Träger / Frequenz in kHz</text>
<text x="624.3" y="612" text-anchor="middle">Senderichtung</text>
<text x="624.3" y="626" text-anchor="middle">Empfangsrichtung</text>
<text x="624.3" y="640" text-anchor="middle">Pilottöne</text>
<text x="731.2" y="612" text-anchor="middle">(Upstream)</text>
<text x="731.2" y="626" text-anchor="middle">(Downstream)</text>
<text x="875.6" y="612" text-anchor="middle">Kompensierter Leitungsstörer</text>
<text x="875.6" y="626" text-anchor="middle">L2 Power Mode aktiv</text>
</svg>
<div id="ftr" class="abs"><div class="abs g"></div></div>
<div class="abs rbtn" id="aktbtn" style="left:905px;top:680px;width:106px;height:21px;"></div>
<svg class="abs" style="left:912px;top:682px" width="17" height="17" viewBox="0 0 17 17"><ellipse cx="8.7" cy="8.5" rx="5.7" ry="7.6" transform="rotate(22 8.7 8.5)" fill="#8c8c8c" stroke="#222" stroke-width="1"/><path d="M11 1.6 C9.2 4 9.6 6 10.6 7.6 C11.8 9.6 11 12 8 15.2 L12 13.6 L14.2 7 L13.6 2.8 Z" fill="#666"/><path d="M0.9 9.2 L5.4 3.4 L8.4 2.6 C6 5.6 6.4 7.4 7.8 9 C9.2 10.6 8.4 12.8 5.6 15.4 L3.8 14.4 Z" fill="#f6f6f6" stroke="#222" stroke-width=".7" stroke-linejoin="round"/><path d="M9.4 3 C7.6 5.4 8 7 9.2 8.6 C10.4 10.4 9.6 12.2 7.4 14.6" stroke="#e8e8e8" stroke-width=".9" fill="none"/><path d="M16.6 7.4 L13.4 4.2 L13.8 11 Z" fill="#2b2b2b"/></svg>
<div class="abs" id="akttxt" style="letter-spacing:-0.1px;left:931px;top:684px;font-size:12px;line-height:14px;font-weight:bold;color:#e2001a;white-space:nowrap;">Aktualisieren</div>
<div id="statusbar" class="abs"></div>
<svg class="abs" style="left:3px;top:882px" width="16" height="16" viewBox="0 0 20 18"><path d="M6 0.8 H14 L19.2 5.6 V12.4 L14 17.2 H6 L0.8 12.4 V5.6 Z" fill="#c8161d" stroke="#8e0d12" stroke-width="1"/><path d="M6.4 2 H13.6 L18 6 V9 H2 V6 Z" fill="#e0444a" opacity=".7"/><text x="10" y="12.6" font-size="8.5" font-weight="bold" fill="#fff" text-anchor="middle" textLength="14.5" lengthAdjust="spacingAndGlyphs">ABP</text></svg>
<div class="abs" style="left:20px;top:889px;width:0;height:0;border-left:2.5px solid transparent;border-right:2.5px solid transparent;border-top:3px solid #222;"></div>
<svg class="abs" style="left:35px;top:885px" width="10" height="10" viewBox="0 0 10 10"><path d="M1.5 1.5 L8.5 8.5 M8.5 1.5 L1.5 8.5" stroke="#3a3a3a" stroke-width="1.7" fill="none"/></svg>
<div class="abs" style="left:0;top:899px;width:1440px;height:1px;background:#e4eaf4;"></div>

</body>
</html>
